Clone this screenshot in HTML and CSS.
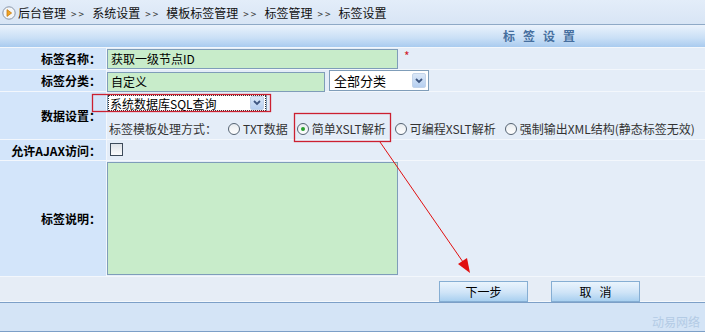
FILE: index.html
```html
<!DOCTYPE html>
<html lang="zh-CN">

<head>
    <meta charset="UTF-8" />
    <title>标签设置</title>
    <link rel="stylesheet" href="styles.css">
</head>

<body>
    <div class="crumb">
        <svg class="crumb-icon" width="14" height="14" viewBox="0 0 14 14">
            <circle cx="7" cy="7" r="6.2" fill="#f4f6f8" stroke="#8795a8" />
            <path d="M5 3.6 L9.6 7 L5 10.4 Z" fill="#f0a424" stroke="#c67c12" stroke-width="0.8" />
        </svg>
        <span>后台管理<span class="sep">&gt;&gt;</span>系统设置<span class="sep">&gt;&gt;</span>模板标签管理<span class="sep">&gt;&gt;</span>标签管理<span class="sep">&gt;&gt;</span>标签设置</span>
    </div>

    <div class="panel-head">标签设置</div>

    <div class="form">
        <div class="label">标签名称：</div>
        <div class="field">
            <div class="input name-input">获取一级节点ID</div>
            <span class="required">*</span>
        </div>

        <div class="label">标签分类：</div>
        <div class="field">
            <div class="input type-input">自定义</div>
            <div class="select type-select">
                <span>全部分类</span>
                <span class="select-btn">
                    <svg width="8" height="6" viewBox="0 0 8 6"><path d="M1 1 L4 4 L7 1" fill="none" stroke="#3e5680" stroke-width="1.8" /></svg>
                </span>
            </div>
        </div>

        <div class="label">数据设置：</div>
        <div class="field field-stack">
            <div class="select source-select">
                <span>系统数据库SQL查询</span>
                <span class="select-btn">
                    <svg width="8" height="6" viewBox="0 0 8 6"><path d="M1 1 L4 4 L7 1" fill="none" stroke="#3e5680" stroke-width="1.8" /></svg>
                </span>
            </div>
            <div class="radios">
                <span class="radios-title">标签模板处理方式：</span>
                <span class="radio"><i class="dot"></i>TXT数据</span>
                <span class="radio"><i class="dot checked"></i>简单XSLT解析</span>
                <span class="radio"><i class="dot"></i>可编程XSLT解析</span>
                <span class="radio"><i class="dot"></i>强制输出XML结构(静态标签无效)</span>
            </div>
        </div>

        <div class="label">允许AJAX访问：</div>
        <div class="field">
            <i class="checkbox"></i>
        </div>

        <div class="label">标签说明：</div>
        <div class="field field-top">
            <div class="input note-input"></div>
        </div>
    </div>

    <div class="actions">
        <button class="btn">下一步</button>
        <button class="btn">取&nbsp;&nbsp;&nbsp;消</button>
    </div>

    <div class="footer">动易网络</div>

    <!-- red notes drawn over the form -->
    <svg class="marks" width="705" height="332" viewBox="0 0 705 332">
        <rect x="92.5" y="94.5" width="178" height="17" fill="none" stroke="#cc2030" stroke-width="1.3" />
        <rect x="294.5" y="113.5" width="96" height="28" fill="none" stroke="#cc2030" stroke-width="1.3" />
        <line x1="380" y1="142" x2="463" y2="262" stroke="#e01010" stroke-width="1" />
        <polygon points="470,273 467,258 458,264" fill="#e01010" />
    </svg>
</body>

</html>
```

FILE: styles.css
```css
:root {
    --label-bg: #d3e5fa;
    --field-bg: #e4edf8;
    --line: #f3f7fc;
    --input-border: #7f9db9;
    --green: #c8ecca;
    --font: "Noto Sans CJK SC", "Liberation Sans", sans-serif;
}

body {
    margin: 0;
    width: 705px;
    height: 332px;
    overflow: hidden;
    position: relative;
    font-family: var(--font);
    font-size: 12px;
    color: #000;
    background-color: var(--field-bg);
}

.crumb {
    height: 25px;
    box-sizing: border-box;
    display: flex;
    align-items: center;
    gap: 2px;
    padding-left: 2px;
    background: linear-gradient(#e3edf9, #d8e5f5);
    border-bottom: 1px solid #8ea9c6;
    color: #111;
}

.crumb-icon {
    margin-top: 1px;
}

.sep {
    display: inline-block;
    margin: 0 6px 0 5px;
    font-size: 10px;
    letter-spacing: 2px;
    color: #333;
}

.panel-head {
    height: 22px;
    line-height: 22px;
    padding-left: 373px;
    text-align: center;
    letter-spacing: 8px;
    text-indent: 8px;
    font-weight: bold;
    color: #466f9f;
    background: linear-gradient(#ebf3fc, #c9dff6 60%, #a9cbef);
}

.form {
    display: grid;
    grid-template-columns: 106px 1fr;
    grid-template-rows: 21px 21px 47px 20px 115px;
    gap: 1px;
    padding-top: 1px;
    padding-bottom: 1px;
    background-color: var(--line);
}

.label {
    background-color: var(--label-bg);
    font-weight: bold;
    padding-right: 5px;
    display: flex;
    align-items: center;
    justify-content: flex-end;
}

.field {
    background-color: var(--field-bg);
    display: flex;
    align-items: center;
    gap: 4px;
}

.field-stack {
    flex-direction: column;
    align-items: flex-start;
    justify-content: flex-start;
    gap: 0;
}

.field-top {
    align-items: flex-start;
}

.input {
    box-sizing: border-box;
    height: 20px;
    line-height: 18px;
    padding-left: 3px;
    background-color: var(--green);
    border: 1px solid var(--input-border);
    margin-top: 1px;
}

.name-input {
    width: 291px;
}

.type-input {
    width: 218px;
    margin-top: 2px;
}

.note-input {
    width: 291px;
    height: 113px;
}

.required {
    color: #d0202a;
    margin-left: 2px;
    align-self: flex-start;
    line-height: 16px;
}

.select {
    box-sizing: border-box;
    display: flex;
    align-items: center;
    justify-content: space-between;
    background: #fff;
    border: 1px solid var(--input-border);
    padding: 0 2px 0 4px;
}

.type-select {
    width: 100px;
    height: 21px;
    font-size: 13px;
}

.source-select {
    width: 160px;
    height: 18px;
    margin-top: 2px;
    padding-left: 2px;
    outline: 1px dotted #333;
    outline-offset: -2px;
}

.select-btn {
    width: 14px;
    height: 15px;
    display: flex;
    align-items: center;
    justify-content: center;
    background: linear-gradient(#dbe8f8, #b6cff0);
    border: 1px solid #c3d4ea;
    box-sizing: border-box;
    border-radius: 2px;
}

.source-select .select-btn {
    height: 14px;
}

.radios {
    display: flex;
    align-items: center;
    margin-top: 8px;
    padding-left: 2px;
    color: #333;
    white-space: nowrap;
}

.radios-title {
    margin-right: 11px;
}

.radio {
    display: inline-flex;
    align-items: center;
    flex-shrink: 0;
    gap: 3px;
    margin-right: 9px;
}

.dot {
    width: 12px;
    height: 12px;
    flex-shrink: 0;
    box-sizing: border-box;
    border-radius: 50%;
    border: 1px solid #556372;
    background: linear-gradient(#e8ecf0, #fff);
    display: flex;
    align-items: center;
    justify-content: center;
}

.dot.checked::after {
    content: "";
    width: 4px;
    height: 4px;
    border-radius: 50%;
    background-color: #27a02d;
}

.checkbox {
    width: 13px;
    height: 13px;
    box-sizing: border-box;
    margin-left: 3px;
    margin-bottom: 2px;
    border: 1px solid #3c4a5a;
    background: linear-gradient(#dde2e8, #fbfcfd);
}

.actions {
    height: 24px;
    display: flex;
    align-items: center;
    justify-content: center;
    gap: 23px;
    padding-left: 374px;
    background-color: #e6edf6;
    border-bottom: 1px solid #f4f8fc;
}

.btn {
    width: 89px;
    height: 21px;
    margin-top: 4px;
    padding: 0;
    font-family: var(--font);
    font-size: 12px;
    color: #000;
    background: linear-gradient(#eaf4fd, #cfe4f7 55%, #a9d0f0);
    border: 1px solid #86aed3;
}

.footer {
    height: 28px;
    background-color: #d4e4f6;
    border-top: 1px solid #7c9fc7;
    border-bottom: 1px solid #7c9fc7;
    text-align: right;
    padding-right: 5px;
    line-height: 38px;
    font-size: 12px;
    color: #b3cbe5;
}

.marks {
    position: absolute;
    top: 0;
    left: 0;
    pointer-events: none;
}
```
